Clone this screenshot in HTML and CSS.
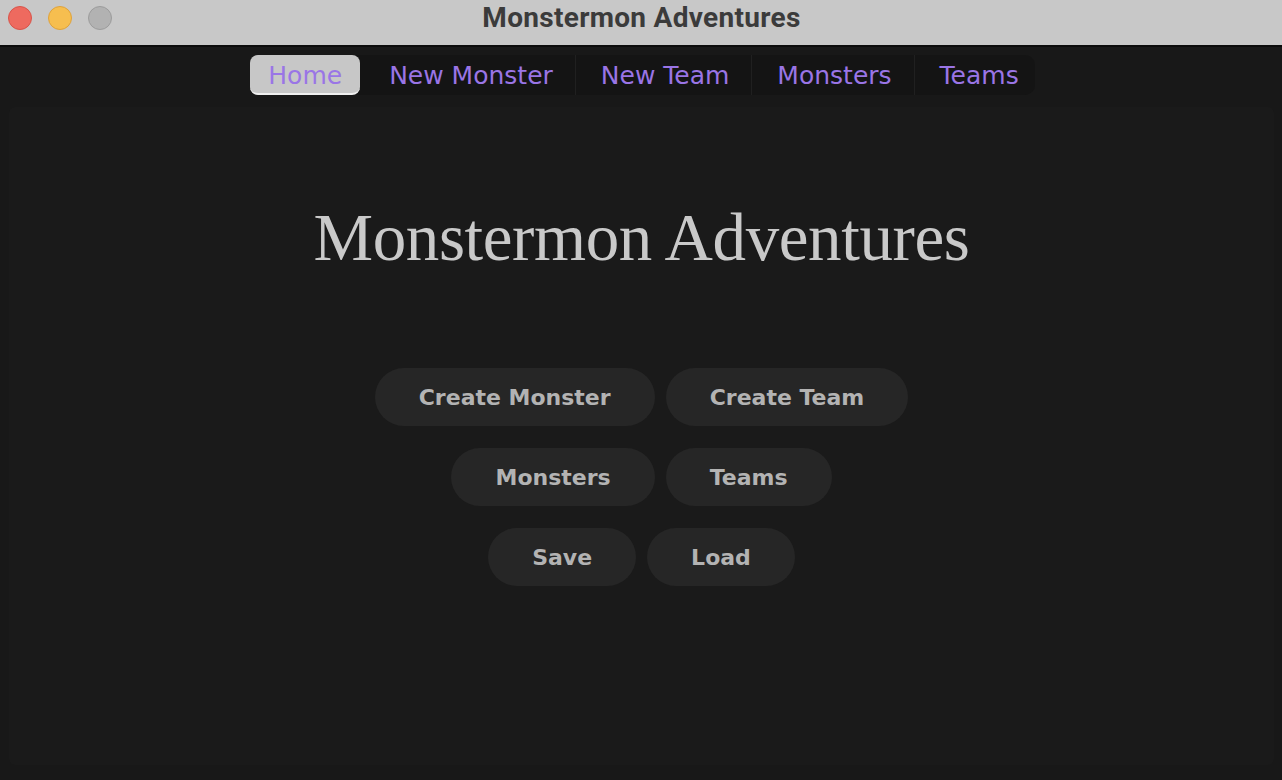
FILE: index.html
```html
<!DOCTYPE html>
<html>
<head>
<meta charset="utf-8">
<title>Monstermon Adventures</title>
<link rel="stylesheet" href="styles.css">
</head>
<body>
<header class="titlebar">
  <div class="lights">
    <span class="light red"></span>
    <span class="light yellow"></span>
    <span class="light gray"></span>
  </div>
  <div class="wintitle">Monstermon Adventures</div>
</header>
<div class="window">
  <nav class="nav">
    <a class="nav-item active">Home</a>
    <a class="nav-item first">New Monster</a>
    <a class="nav-item sep">New Team</a>
    <a class="nav-item sep">Monsters</a>
    <a class="nav-item sep last">Teams</a>
  </nav>
  <main class="panel">
    <h1 class="heading">Monstermon Adventures</h1>
    <div class="actions">
      <div class="row">
        <button class="btn">Create Monster</button>
        <button class="btn">Create Team</button>
      </div>
      <div class="row">
        <button class="btn">Monsters</button>
        <button class="btn">Teams</button>
      </div>
      <div class="row">
        <button class="btn">Save</button>
        <button class="btn">Load</button>
      </div>
    </div>
  </main>
</div>
</body>
</html>
```

FILE: styles.css
```css
html, body {
  margin: 0;
  padding: 0;
  height: 100%;
}
body {
  background: #181818;
  font-family: "DejaVu Sans", sans-serif;
  overflow: hidden;
}
.titlebar {
  height: 45px;
  background: #c8c8c8;
  border-bottom: 2px solid #0c0c0c;
  display: flex;
  align-items: center;
  justify-content: center;
  position: relative;
}
.lights {
  position: absolute;
  left: 8px;
  top: 6px;
  display: flex;
  gap: 16px;
}
.light {
  width: 24px;
  height: 24px;
  border-radius: 50%;
  box-sizing: border-box;
  border: 1px solid rgba(0,0,0,0.15);
}
.red { background: #ee6a5f; border-color: #d8544a; }
.yellow { background: #f6be4f; border-color: #dea23c; }
.gray { background: #b2b2b2; border-color: #9c9c9c; }
.wintitle {
  font-family: Roboto, "Liberation Sans", sans-serif;
  font-weight: 700;
  font-size: 28px;
  letter-spacing: 0.3px;
  color: #3b3b3b;
  margin-top: -10px;
  margin-left: 1px;
}
.window {
  height: calc(100% - 47px);
  display: flex;
  flex-direction: column;
  align-items: center;
}
.nav {
  margin-top: 8px;
  margin-left: 3px;
  height: 40px;
  display: flex;
  align-items: center;
  background: #141414;
  border-radius: 10px;
}
.nav-item {
  font-size: 25px;
  color: #9a75e6;
  height: 100%;
  display: flex;
  align-items: center;
  padding: 0 22px 0 25px;
  box-sizing: border-box;
  cursor: pointer;
}
.nav-item.sep {
  border-left: 1px solid #202020;
}
.nav-item.first {
  padding-left: 29px;
}
.nav-item.last {
  padding-right: 16px;
}
.nav-item.active {
  background: #c7c7c7;
  border-radius: 8px;
  border-bottom: 2px solid #f0f0f0;
  padding: 2px 18px 0 18px;
  color: #9a75e6;
}
.panel {
  flex: 1;
  align-self: stretch;
  margin: 12px 8px 15px 9px;
  background: #1a1a1a;
  border-radius: 6px;
  display: flex;
  flex-direction: column;
  align-items: center;
}
.heading {
  margin: 97px 0 0 0;
  font-family: "Liberation Serif", serif;
  font-weight: 400;
  font-size: 67px;
  color: #c9c9c9;
  line-height: 1;
  letter-spacing: -0.4px;
}
.actions {
  margin-top: 97px;
  display: flex;
  flex-direction: column;
  align-items: center;
  gap: 22px;
}
.row {
  display: flex;
  gap: 11px;
  justify-content: center;
}
.btn {
  height: 58px;
  border: none;
  border-radius: 29px;
  background: #262626;
  color: #b3b3b3;
  font-family: "DejaVu Sans", sans-serif;
  font-weight: 700;
  font-size: 22px;
  padding: 0 44px;
  cursor: pointer;
}
```
